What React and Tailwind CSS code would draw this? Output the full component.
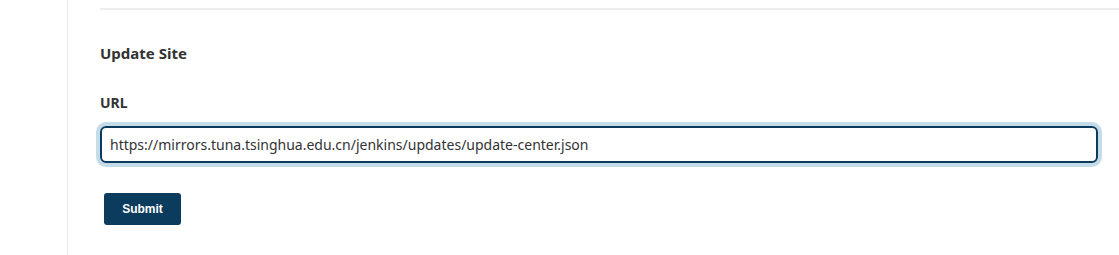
import React, {useState} from 'react';

export default function App() {
    const [url, setUrl] = useState('https://mirrors.tuna.tsinghua.edu.cn/jenkins/updates/update-center.json');

    return (
        <div className="flex h-[255px] bg-white text-[#333] font-['Noto_Sans','Open_Sans',sans-serif]">
            {/* Sidebar edge */}
            <div className="w-[68px] shrink-0 border-r border-[#ebebeb]"/>

            <div className="flex-1 pl-[32px] pt-[8px]">
                <div className="border-t-2 border-[#ededed]"/>

                <form onSubmit={(e) => e.preventDefault()}>
                    <h2 className="mt-[33px] text-[15px] leading-[20px] font-bold text-[#333]">Update Site</h2>

                    <label className="block mt-[31px] text-[14px] leading-[18px] font-bold text-[#333]">URL</label>
                    <input
                        type="text"
                        value={url}
                        onChange={(e) => setUrl(e.target.value)}
                        className="block mt-[14px] w-[998px] h-[37px] px-[8px] border-2 border-[#0b3a5c] rounded-[6px] ring-4 ring-[#c4dbe8] text-[14px] text-[#333] outline-none"
                    />

                    <button
                        type="submit"
                        className="block mt-[30px] ml-[4px] w-[77px] h-[32px] rounded-[3px] bg-[#0b3c5d] text-white text-[12px] font-bold font-['Liberation_Sans',sans-serif]"
                    >
                        Submit
                    </button>
                </form>
            </div>
        </div>
    );
}
